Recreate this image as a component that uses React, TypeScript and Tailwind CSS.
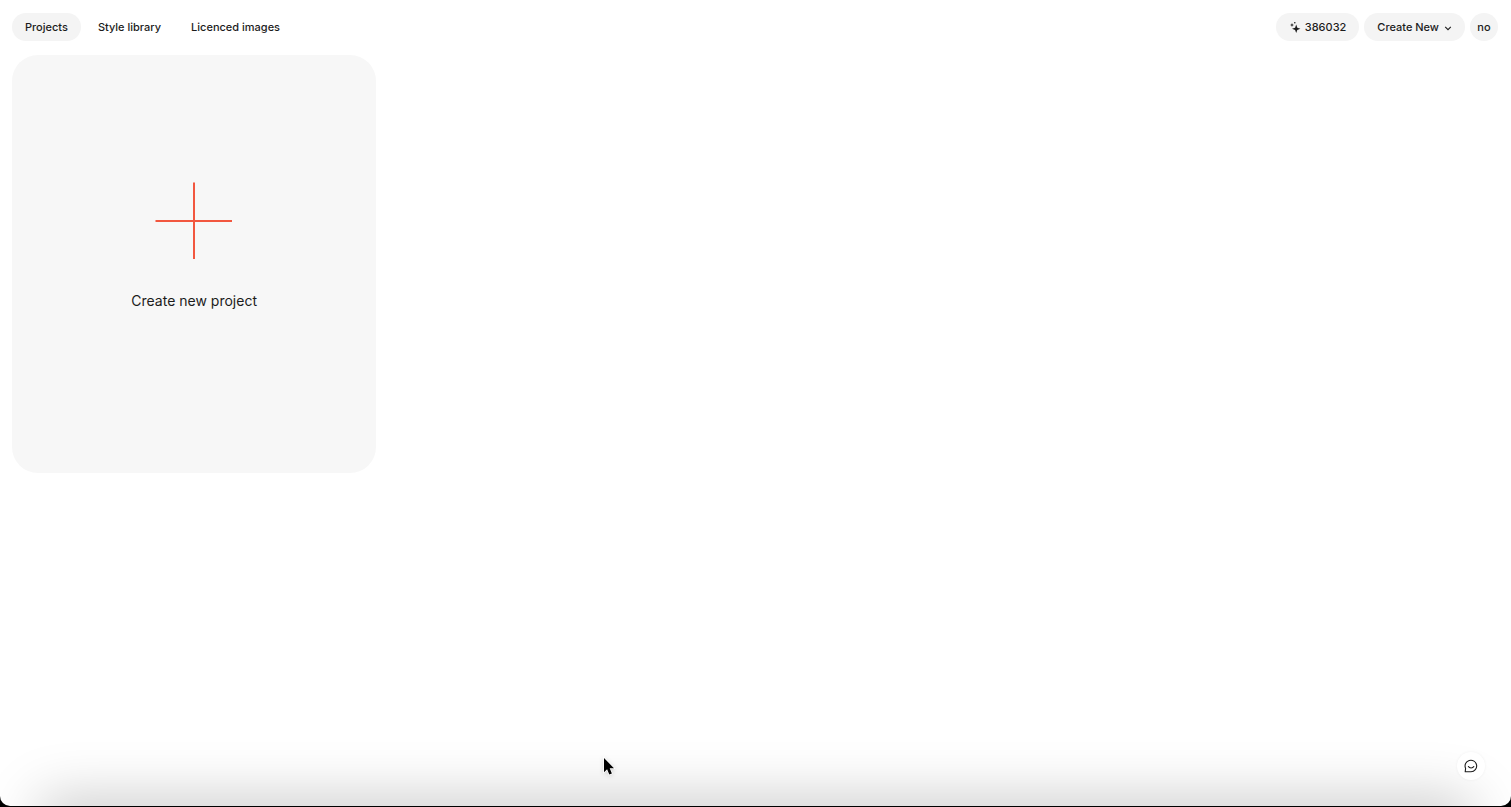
import type { ReactNode } from "react";

const tabs = ["Projects", "Style library", "Licenced images"];

function Pill({ children, className = "" }: { children: ReactNode; className?: string }) {
  return (
    <button
      type="button"
      className={`flex h-7 items-center justify-center rounded-full bg-[#f4f4f4] font-medium ${className}`}
    >
      {children}
    </button>
  );
}

function SparkleIcon() {
  return (
    <svg width="12" height="12" viewBox="0 0 12 12" fill="currentColor" aria-hidden="true">
      <path d="M7.2 3.6 8.3 6.7 11.4 7.8 8.3 8.9 7.2 12 6.1 8.9 3 7.8 6.1 6.7Z" />
      <path d="M3 2 3.6 3.4 5 4 3.6 4.6 3 6 2.4 4.6 1 4 2.4 3.4Z" />
      <circle cx="5.8" cy="1.7" r=".8" />
    </svg>
  );
}

function ChevronIcon() {
  return (
    <svg width="8" height="8" viewBox="0 0 8 8" fill="none" stroke="currentColor" strokeWidth="1.1" aria-hidden="true">
      <path d="M1.2 3.9 4 6.7 6.8 3.9" />
    </svg>
  );
}

function ChatIcon() {
  return (
    <svg width="14" height="14" viewBox="0 0 14 14" fill="none" stroke="currentColor" strokeWidth="1.1" strokeLinejoin="round" aria-hidden="true">
      <path d="M1.2 12.8 1.6 9.4A5.8 5.8 0 1 1 7 12.8Z" />
      <path d="M4.4 7.6C5.4 9.4 8.8 9.4 9.8 7.6" strokeLinecap="round" />
    </svg>
  );
}

function Header() {
  return (
    <header className="flex items-center justify-between pr-[13px] pl-3">
      <nav className="flex gap-1">
        {tabs.map((tab, i) => (
          <a
            key={tab}
            href="#"
            className={`flex h-7 items-center rounded-full px-[13px] font-medium ${i === 0 ? "bg-[#f4f4f4]" : ""}`}
          >
            {tab}
          </a>
        ))}
      </nav>

      <div className="flex gap-[5px]">
        <Pill className="gap-1 px-[13px]">
          <SparkleIcon />
          386032
        </Pill>
        <Pill className="gap-[5px] px-[13px]">
          Create New
          <ChevronIcon />
        </Pill>
        <Pill className="w-7">no</Pill>
      </div>
    </header>
  );
}

export default function App() {
  return (
    <div className="min-h-screen bg-black pb-px font-['Inter',sans-serif] text-[11px] text-[#1c1c1c]">
      <div className="relative min-h-[calc(100vh-1px)] overflow-hidden rounded-b-[10px] bg-white pt-[13px]">
        <Header />

        <main className="mt-[14px] grid grid-cols-4 gap-[10px] px-3">
          <button
            type="button"
            className="flex aspect-[364/418] flex-col items-center justify-center gap-[31px] rounded-[26px] bg-[#f7f7f7] pb-9"
          >
            <svg width="78" height="78" viewBox="0 0 78 78" stroke="#f2573f" strokeWidth="2" aria-hidden="true">
              <path d="M39 .5V77M.5 39H77" />
            </svg>
            <span className="text-sm">Create new project</span>
          </button>
        </main>

        {/* Soft shade along the bottom edge */}
        <div className="pointer-events-none absolute inset-x-12 -bottom-10 h-10 shadow-[0_0_56px_8px_rgba(0,0,0,0.21)]" />

        <button
          type="button"
          aria-label="Open chat"
          className="absolute right-[26px] bottom-[26px] flex size-7 items-center justify-center rounded-full bg-white shadow-[0_0_3px_rgba(0,0,0,0.06)]"
        >
          <ChatIcon />
        </button>

        {/* Pointer */}
        <svg
          className="pointer-events-none absolute bottom-[28px] left-[40%] -ml-[2px] drop-shadow-sm"
          width="14"
          height="22"
          viewBox="0 0 14 22"
          aria-hidden="true"
        >
          <path
            d="M2 2V16.2L5.1 13.3 7.3 18.6 9.9 17.5 7.7 12.3H12Z"
            stroke="white"
            strokeWidth="1.4"
            paintOrder="stroke"
          />
        </svg>
      </div>
    </div>
  );
}
